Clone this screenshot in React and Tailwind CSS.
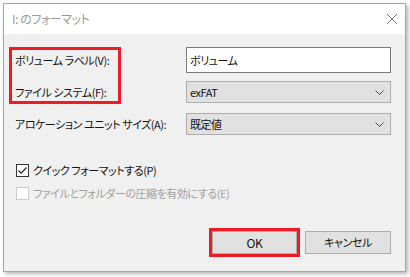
import React from "react";

const font = { fontFamily: '"Noto Sans CJK JP", "Noto Sans", sans-serif' };

function Chevron() {
  return (
    <svg width="9" height="5" viewBox="0 0 9 5" className="mr-[6px]">
      <path d="M0.5 0.5 L4.5 4.5 L8.5 0.5" fill="none" stroke="#444" strokeWidth="1" />
    </svg>
  );
}

function Select({ value }) {
  return (
    <div className="flex items-center justify-between h-[22px] w-[205px] bg-[#e1e1e1] border border-[#adadad] pl-[3px]">
      <span className="text-[#111] leading-none">{value}</span>
      <Chevron />
    </div>
  );
}

function Checkbox({ checked, disabled, label }) {
  return (
    <div className="flex items-center ml-[1px]">
      <div
        className={`w-[13px] h-[13px] border flex items-center justify-center bg-white ${
          disabled ? "border-[#cccccc]" : "border-[#333333]"
        }`}
      >
        {checked && (
          <svg width="11" height="11" viewBox="0 0 11 11">
            <path d="M1.5 5.5 L4.2 8.2 L9.5 2.5" fill="none" stroke="#222" strokeWidth="1.2" />
          </svg>
        )}
      </div>
      <span
        className={`ml-[4px] leading-none whitespace-nowrap ${
          disabled ? "text-[#a0a0a0]" : "text-[#111]"
        }`}
      >
        {label}
      </span>
    </div>
  );
}

export default function App() {
  return (
    <div
      className="w-[410px] h-[277px] bg-white pt-[3px] pl-[3px] text-[11px] tracking-[-0.04em] [font-feature-settings:'palt']"
      style={font}
    >
      <div className="w-[403px] h-[269px] border border-[#a5a5a5] shadow-[2px_2px_4px_rgba(0,0,0,0.3)] flex flex-col">
        {/* タイトルバー */}
        <div className="h-[30px] bg-white flex items-center justify-between pl-[8px] pr-[4px]">
          <span className="text-[12px] text-[#999999]">I: のフォーマット</span>
          <svg width="12" height="12" viewBox="0 0 12 12" className="mr-[3px]">
            <path d="M1 1 L11 11 M11 1 L1 11" stroke="#777" strokeWidth="1" />
          </svg>
        </div>

        {/* 本体 */}
        <div className="relative flex-1 bg-[#f0f0f0] pt-[13px] pl-[11px] pr-[13px] flex flex-col">
          <div className="absolute left-[5px] top-[13px] w-[112px] h-[57px] border-[3px] border-[#ed1c24]" />

          <div className="flex items-center h-[26px]">
            <span className="w-[171px] text-[#111] whitespace-nowrap">ボリューム ラベル(V):</span>
            <div className="h-[26px] w-[205px] bg-white border border-[#7a7a7a] flex items-center pl-[3px]">
              <span className="text-[#111]">ボリューム</span>
            </div>
          </div>

          <div className="flex items-center mt-[8px]">
            <span className="w-[171px] text-[#111] whitespace-nowrap">ファイル システム(F):</span>
            <Select value="exFAT" />
          </div>

          <div className="flex items-center mt-[10px]">
            <span className="w-[171px] text-[#111] whitespace-nowrap">アロケーション ユニット サイズ(A):</span>
            <Select value="既定値" />
          </div>

          <div className="mt-[29px] flex flex-col gap-[10px]">
            <Checkbox checked label="クイック フォーマットする(P)" />
            <Checkbox disabled label="ファイルとフォルダーの圧縮を有効にする(E)" />
          </div>

          <div className="mt-auto mb-[17px] flex justify-end gap-[8px] pr-[1px]">
            <div className="relative">
              <div className="w-[85px] h-[23px] bg-[#e1e1e1] border border-[#adadad] flex items-center justify-center text-[12px] text-[#111]">
                OK
              </div>
              <div className="absolute -inset-[3px] border-[3px] border-[#ed1c24]" />
            </div>
            <div className="w-[86px] h-[23px] bg-[#e1e1e1] border border-[#adadad] flex items-center justify-center text-[#111]">
              キャンセル
            </div>
          </div>
        </div>
      </div>
    </div>
  );
}
